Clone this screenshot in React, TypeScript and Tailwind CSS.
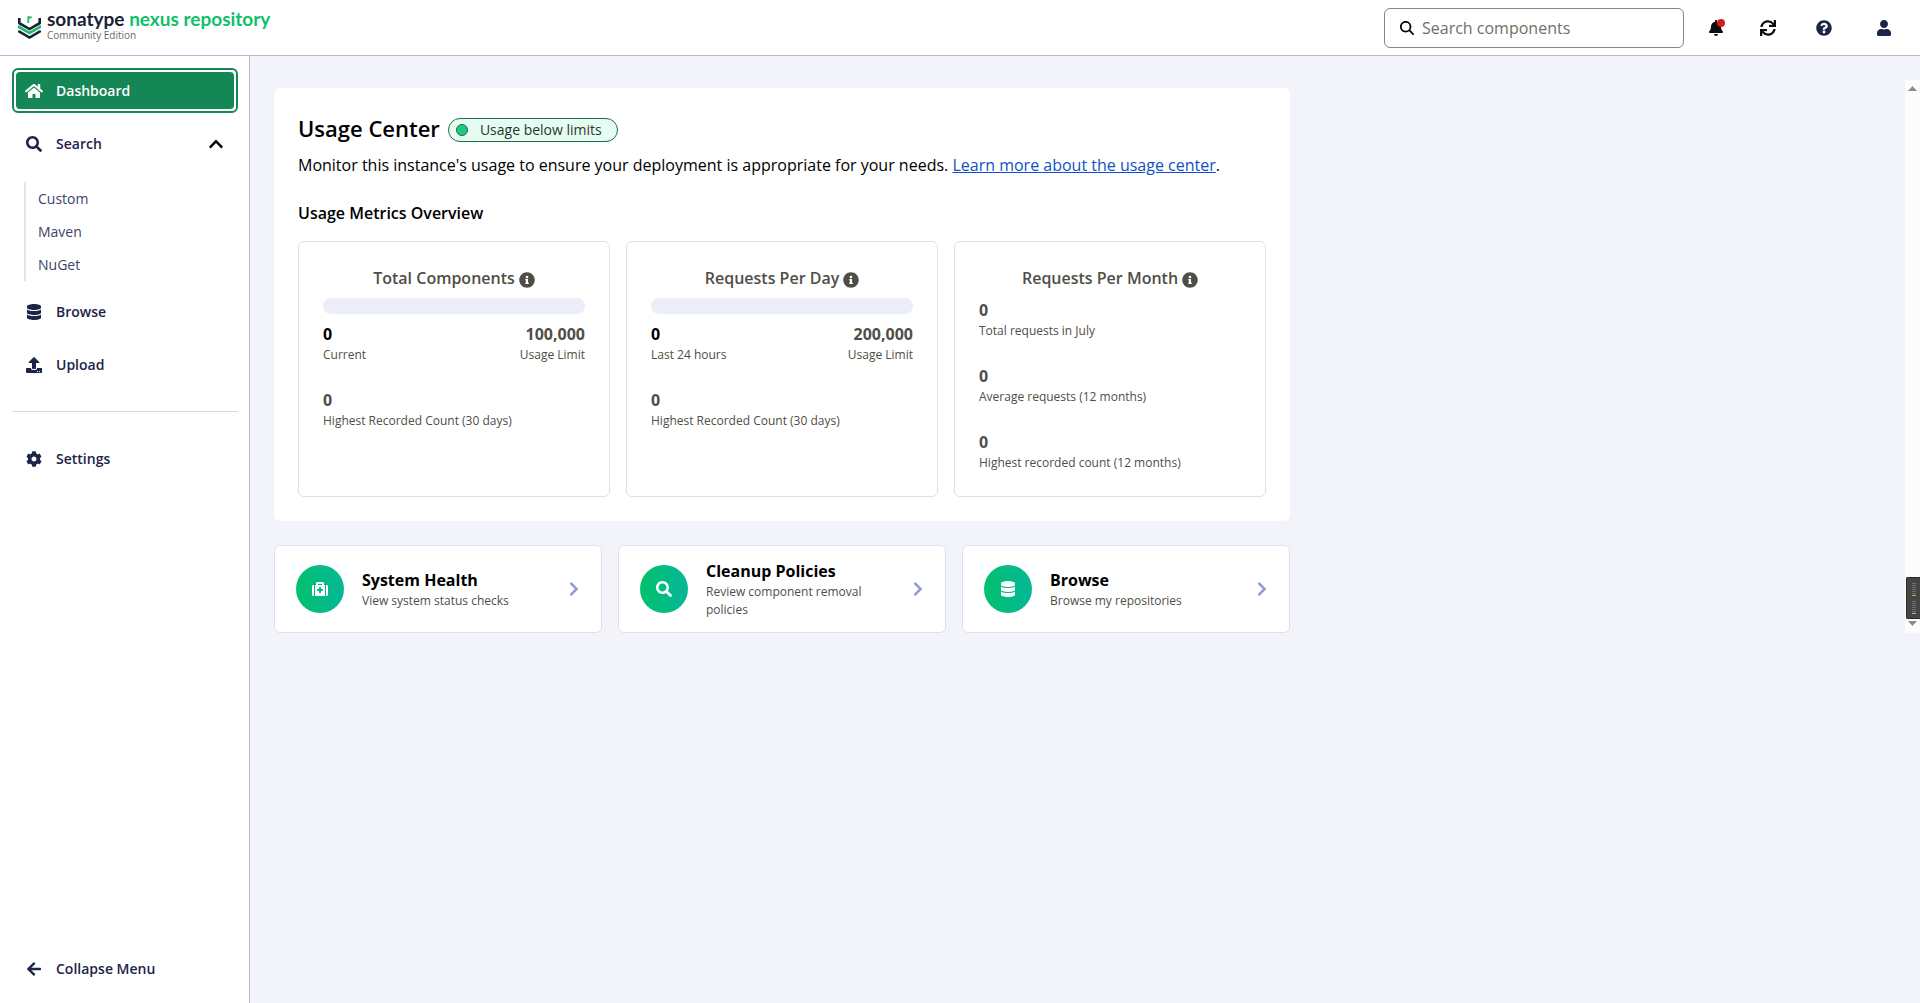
import { useState, type ReactNode } from "react";
import {
  FaArrowLeft,
  FaBell,
  FaChevronRight,
  FaChevronUp,
  FaCog,
  FaDatabase,
  FaHome,
  FaInfoCircle,
  FaMedkit,
  FaQuestionCircle,
  FaSearch,
  FaSync,
  FaUpload,
  FaUser,
} from "react-icons/fa";
import { FaMagnifyingGlass } from "react-icons/fa6";

type Stat = { value: string; label: string };

const monthStats: Stat[] = [
  { value: "0", label: "Total requests in July" },
  { value: "0", label: "Average requests (12 months)" },
  { value: "0", label: "Highest recorded count (12 months)" },
];

const actions = [
  { title: "System Health", text: "View system status checks", icon: <FaMedkit className="size-4" /> },
  { title: "Cleanup Policies", text: "Review component removal policies", icon: <FaSearch className="size-4" /> },
  { title: "Browse", text: "Browse my repositories", icon: <FaDatabase className="size-4" /> },
];

function Logo() {
  return (
    <a href="#" className="flex items-center gap-[6px]" aria-label="Sonatype Nexus Repository Community Edition">
      <svg viewBox="0 0 23 25" className="h-[25px] w-[23px]" fill="none" strokeWidth="2.6">
        <path d="M1.3 3v5.2l10.2 5.9 10.2-5.9V3" stroke="#1a1f36" />
        <path d="M1.3 10.6v1.6l10.2 5.8 10.2-5.8v-1.6" stroke="#1ebd6d" />
        <path d="M1.3 15.6v1l10.2 6 10.2-6v-1" stroke="#1a1f36" />
        <path d="M10.3 8V1.2M10.3 4q.4-2 3.4-1.7" stroke="#1ebd6d" strokeWidth="1.8" />
      </svg>
      <span className="flex flex-col pb-[5px]">
        <span className="font-[Lato,sans-serif] text-[19px] leading-5 font-bold text-[#1a1f36]">
          sonatype <span className="text-[#0fbf6a]">nexus repository</span>
        </span>
        <span className="text-[10px] leading-3 text-[#6b6a62]">Community Edition</span>
      </span>
    </a>
  );
}

function Header() {
  return (
    <header className="flex h-14 items-center border-b border-[#b4bad8] bg-white pl-[18px] pr-7">
      <Logo />
      <label className="ml-auto flex h-10 w-[300px] items-center gap-2 rounded-md border border-[#85857a] px-[15px]">
        <FaMagnifyingGlass className="size-[14px] shrink-0 text-black" />
        <input
          type="text"
          aria-label="Search components"
          placeholder="Search components"
          className="w-full min-w-0 text-base text-black outline-none placeholder:text-[#706f66]"
        />
      </label>
      <button aria-label="Notifications" className="relative ml-6">
        <FaBell className="size-4 text-[#0d0d0d]" />
        <span className="absolute -top-px -right-px size-2 rounded-full bg-[#d51b1b]" />
      </button>
      <button aria-label="Refresh" className="ml-9">
        <FaSync className="size-4 text-[#0d0d0d]" />
      </button>
      <button aria-label="Help" className="ml-10">
        <FaQuestionCircle className="size-4 text-[#1c2447]" />
      </button>
      <button aria-label="Account" className="ml-11">
        <FaUser className="size-4 text-[#1c2447]" />
      </button>
    </header>
  );
}

function NavItem({ icon, label }: { icon: ReactNode; label: string }) {
  return (
    <a href="#" className="flex h-[45px] items-center px-[13px] text-sm font-semibold text-[#1c2447]">
      <span className="flex w-[18px] justify-center">{icon}</span>
      <span className="ml-[13px]">{label}</span>
    </a>
  );
}

function Sidebar() {
  const [open, setOpen] = useState(true);

  return (
    <aside className="flex w-[250px] shrink-0 flex-col border-r border-[#b4bad8] bg-white py-3 pr-[11px] pl-3">
      <nav className="flex flex-col">
        <a href="#" className="h-[45px] rounded-md border-2 border-[#158655] p-[2px]">
          <span className="flex h-full items-center rounded-sm bg-[#158655] px-[9px] text-sm font-semibold text-white">
            <FaHome className="size-[18px]" />
            <span className="ml-[13px]">Dashboard</span>
          </span>
        </a>
        <button
          onClick={() => setOpen(!open)}
          aria-expanded={open}
          className="mt-2 flex h-[45px] items-center pr-[14px] pl-[13px] text-sm font-semibold text-[#1c2447]"
        >
          <span className="flex w-[18px] justify-center">
            <FaSearch className="size-4" />
          </span>
          <span className="ml-[13px]">Search</span>
          <FaChevronUp className="ml-auto size-4 text-black" />
        </button>
        {open && (
          <ul className="mt-4 ml-3 border-l-2 border-[#e6e6e1] text-sm text-[#3c4468]">
            {["Custom", "Maven", "NuGet"].map((s) => (
              <li key={s}>
                <a href="#" className="flex h-[33px] items-center pl-3">{s}</a>
              </li>
            ))}
          </ul>
        )}
        <div className="mt-2 flex flex-col gap-2">
          <NavItem icon={<FaDatabase className="size-4" />} label="Browse" />
          <NavItem icon={<FaUpload className="size-4" />} label="Upload" />
        </div>
        <hr className="my-6 border-[#d6dbf0]" />
        <NavItem icon={<FaCog className="size-4" />} label="Settings" />
      </nav>
      <button className="mt-auto flex h-[45px] items-center px-[13px] text-sm font-semibold text-[#1c2447]">
        <span className="flex w-[18px] justify-center">
          <FaArrowLeft className="size-4" />
        </span>
        <span className="ml-[13px]">Collapse Menu</span>
      </button>
    </aside>
  );
}

function StatBlock({ value, label, strong, right }: Stat & { strong?: boolean; right?: boolean }) {
  return (
    <div className={right ? "text-right" : ""}>
      <div className={`text-base font-bold ${strong ? "text-black" : "text-[#4f4e46]"}`}>{value}</div>
      <div className="text-xs leading-[18px] text-[#4f4e46]">{label}</div>
    </div>
  );
}

function MetricCard({ title, children }: { title: string; children: ReactNode }) {
  return (
    <section className="rounded-md border border-[#dcdff2] p-6">
      <h3 className="mb-2 flex items-center justify-center gap-1 text-base font-semibold text-[#4f4e46]">
        {title}
        <FaInfoCircle className="mt-1 size-4" />
      </h3>
      {children}
    </section>
  );
}

function UsageMetric({ title, current, limit }: { title: string; current: string; limit: string }) {
  return (
    <MetricCard title={title}>
      <div className="mb-2 h-4 rounded-lg bg-[#ebeef8]" role="progressbar" aria-label={title} aria-valuenow={0} />
      <div className="mb-6 flex justify-between">
        <StatBlock value="0" label={current} strong />
        <StatBlock value={limit} label="Usage Limit" right />
      </div>
      <StatBlock value="0" label="Highest Recorded Count (30 days)" />
    </MetricCard>
  );
}

function UsageCenter() {
  return (
    <section className="rounded-md bg-white p-6">
      <div className="mb-2 flex items-center gap-2">
        <h1 className="text-[22px] leading-[33px] font-semibold">Usage Center</h1>
        <span className="mt-[2px] flex h-6 items-center gap-3 rounded-full border border-[#14704a] bg-[#e8fbf3] pr-[15px] pl-[7px] text-sm text-[#1c3a2c]">
          <span className="size-3 rounded-full border border-[#14704a] bg-[#1fc97f]" />
          Usage below limits
        </span>
      </div>
      <p className="mb-6 text-base">
        Monitor this instance's usage to ensure your deployment is appropriate for your needs.{" "}
        <a href="#" className="text-[#0f51c4] underline">Learn more about the usage center</a>.
      </p>
      <h2 className="mb-4 text-base font-semibold">Usage Metrics Overview</h2>
      <div className="grid grid-cols-3 gap-4">
        <UsageMetric title="Total Components" current="Current" limit="100,000" />
        <UsageMetric title="Requests Per Day" current="Last 24 hours" limit="200,000" />
        <MetricCard title="Requests Per Month">
          <div className="flex flex-col gap-6">
            {monthStats.map((s) => (
              <StatBlock key={s.label} {...s} />
            ))}
          </div>
        </MetricCard>
      </div>
    </section>
  );
}

function Meter({ light }: { light: string }) {
  return (
    <div className="flex flex-col gap-px">
      {[0, 1, 2, 3, 4, 5].map((n) => (
        <span key={n} className="h-px w-1 bg-[#707070]" />
      ))}
      <span className={`h-px w-1 ${light}`} />
    </div>
  );
}

export default function App() {
  return (
    <div className="flex min-h-screen flex-col bg-[#f3f4fa] font-['Open_Sans',sans-serif] text-black">
      <Header />
      <div className="flex flex-1">
        <Sidebar />
        <main className="flex flex-1 items-start justify-between pt-6 pl-6">
          <div className="flex max-w-[1016px] flex-1 flex-col gap-6 pt-2">
            <UsageCenter />
            <div className="grid grid-cols-3 gap-4">
              {actions.map((a) => (
                <a
                  key={a.title}
                  href="#"
                  className="flex min-h-[88px] items-center rounded-md border border-[#dcdff2] bg-white pr-[19px] pl-[21px]"
                >
                  <span className="flex size-12 shrink-0 items-center justify-center rounded-full bg-linear-to-r from-[#04c06c] to-[#06b796] text-white">
                    {a.icon}
                  </span>
                  <span className="ml-[18px] flex max-w-44 flex-col">
                    <span className="text-base font-bold">{a.title}</span>
                    <span className="text-xs leading-[18px] text-[#4f4e46]">{a.text}</span>
                  </span>
                  <FaChevronRight className="ml-auto size-4 text-[#929ad4]" />
                </a>
              ))}
            </div>
          </div>
          <div className="relative flex max-h-[553px] w-[15px] flex-col items-center justify-between self-stretch bg-[#fcfcfc] pt-[6px] pb-[7px]">
            <svg viewBox="0 0 9 5" className="w-[9px]" fill="#8b8b8b">
              <path d="M0 5 4.5 0 9 5z" />
            </svg>
            <svg viewBox="0 0 9 5" className="w-[9px]" fill="#8b8b8b">
              <path d="M0 0 4.5 5 9 0z" />
            </svg>
            <div className="absolute right-0 bottom-[14px] flex h-[42px] w-[14px] flex-col items-center justify-center gap-[5px] rounded-l-xs border border-r-0 border-[#2c2c2c] bg-[#454545]">
              <Meter light="bg-[#f5a623]" />
              <Meter light="bg-[#8fe03c]" />
            </div>
          </div>
        </main>
      </div>
    </div>
  );
}
